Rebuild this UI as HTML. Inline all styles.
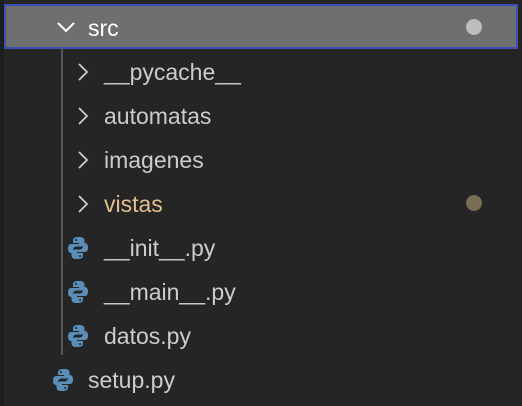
<!DOCTYPE html><html><head><style>
body{margin:0;width:522px;height:406px;background:#252526;font-family:"Segoe UI","Liberation Sans",sans-serif;overflow:hidden;position:relative}
.r{position:absolute;left:0;width:522px;height:44px;line-height:44px;font-size:23px;color:#cccccc}
.t{position:absolute;top:0px}
.sel{position:absolute;left:4px;top:4px;width:510px;height:41px;background:#6f6f6f;border:2px solid #3b4fb8}
.g{position:absolute;left:61px;top:48px;width:2px;height:307px;background:#585858}
.ch{position:absolute}
</style></head><body>
<div style="position:absolute;left:0;top:0;width:4px;height:406px;background:#1e1e1e"></div>
<div class="sel"></div>
<div style="position:absolute;left:466px;top:19px;width:16px;height:16px;border-radius:50%;background:#bdbdbd"></div>
<svg class="ch" style="left:56px;top:20px" width="20" height="14"><path d="M2 3 L10 11 L18 3" stroke="#fff" stroke-width="2" fill="none"/></svg>
<div class="r" style="top:6px"><span class="t" style="left:88px;color:#fff">src</span></div>
<div class="g"></div>
<svg width="0" height="0" style="position:absolute"><defs><g id="py"><path d="M10 1c-4 0-5 1.5-5 3.5V7h6v1H3C1 8 0 10 0 12.5S1 17 3 17h2v-3c0-2 1.5-3.5 3.5-3.5h5c1.7 0 3-1.300 3-3V4.5C16.5 2.5 15 1 12 1z" fill="#5a8db7"/><path d="M10 23c4 0 5-1.5 5-3.5V17H9v-1h8c2 0 3-2 3-4.5S19 7 17 7h-2v3c0 2-1.5 3.5-3.5 3.5h-5c-1.7 0-3 1.3-3 3v3c0 2 1.5 3.5 4.5 3.5z" fill="#5a8db7"/><circle cx="8" cy="4" r="1" fill="#252526"/><circle cx="12" cy="20" r="1" fill="#252526"/></g></defs></svg>
<div class="r" style="top:50px"><svg class="ch" style="left:76px;top:12px" width="14" height="20"><path d="M3 2 L11 10 L3 18" stroke="#ccc" stroke-width="1.8" fill="none"/></svg><span class="t" style="left:104px">__pycache__</span></div>
<div class="r" style="top:94px"><svg class="ch" style="left:76px;top:12px" width="14" height="20"><path d="M3 2 L11 10 L3 18" stroke="#ccc" stroke-width="1.8" fill="none"/></svg><span class="t" style="left:104px">automatas</span></div>
<div class="r" style="top:138px"><svg class="ch" style="left:76px;top:12px" width="14" height="20"><path d="M3 2 L11 10 L3 18" stroke="#ccc" stroke-width="1.8" fill="none"/></svg><span class="t" style="left:104px">imagenes</span></div>
<div class="r" style="top:182px"><svg class="ch" style="left:76px;top:12px" width="14" height="20"><path d="M3 2 L11 10 L3 18" stroke="#ccc" stroke-width="1.8" fill="none"/></svg><span class="t" style="left:104px;color:#e2c08d">vistas</span></div>
<div style="position:absolute;left:466px;top:195px;width:16px;height:16px;border-radius:50%;background:#7a6d55"></div>
<div class="r" style="top:226px"><svg class="ch" style="left:68px;top:10px" width="22" height="24"><use href="#py"/></svg><span class="t" style="left:104px">__init__.py</span></div>
<div class="r" style="top:270px"><svg class="ch" style="left:68px;top:10px" width="22" height="24"><use href="#py"/></svg><span class="t" style="left:104px">__main__.py</span></div>
<div class="r" style="top:314px"><svg class="ch" style="left:68px;top:10px" width="22" height="24"><use href="#py"/></svg><span class="t" style="left:104px">datos.py</span></div>
<div class="r" style="top:358px"><svg class="ch" style="left:53px;top:10px" width="22" height="24"><use href="#py"/></svg><span class="t" style="left:88px">setup.py</span></div>
</body></html>
